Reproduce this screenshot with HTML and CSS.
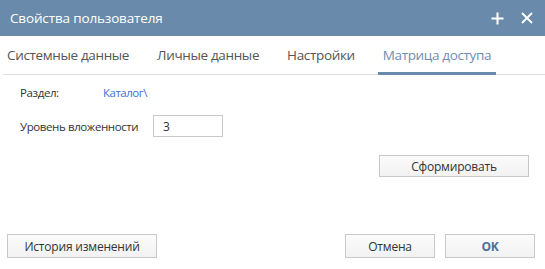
FILE: index.html
```html
<!doctype html>
<html>
<head>
	<meta charset="utf-8">
	<title>Свойства пользователя</title>
	<link rel="stylesheet" href="styles.css">
</head>
<body>
	<!-- окно свойств -->
	<div class="dialog">
		<!-- заголовок -->
		<div class="dlg-head">
			<span class="dlg-title">Свойства пользователя</span>
			<span class="dlg-tools">
				<svg width="13" height="13" viewBox="0 0 13 13"><path d="M6.5 0.5v12M0.5 6.5h12" stroke="#fff" stroke-width="2"/></svg>
				<svg width="12" height="12" viewBox="0 0 12 12"><path d="M1 1l10 10M11 1L1 11" stroke="#fff" stroke-width="1.8"/></svg>
			</span>
		</div>
		<!-- вкладки -->
		<ul class="tabs">
			<li>Системные данные</li>
			<li>Личные данные</li>
			<li>Настройки</li>
			<li class="current">Матрица доступа</li>
		</ul>
		<!-- содержимое вкладки -->
		<div class="dlg-body">
			<div class="row row-first">
				<span class="label">Раздел:</span>
				<a class="link" href="#">Каталог\</a>
			</div>
			<div class="row">
				<span class="label label-wide">Уровень вложенности</span>
				<input class="field" type="text" value="3">
			</div>
			<div class="actions">
				<button class="btn btn-wide">Сформировать</button>
			</div>
		</div>
		<!-- кнопки внизу -->
		<div class="dlg-foot">
			<button class="btn btn-wide">История изменений</button>
			<span class="foot-right">
				<button class="btn">Отмена</button>
				<button class="btn btn-ok">OK</button>
			</span>
		</div>
	</div>
</body>
</html>
```

FILE: styles.css
```css
html,body{margin:0;padding:0;background:#fff;}
body{font-family:"Open Sans","Noto Sans",sans-serif;color:#333;}
ul{margin:0;padding:0;list-style:none;}
/* окно */
.dialog{
	width:545px;
	height:265px;
	display:flex;
	flex-direction:column;
	background:#fff;
	box-shadow:0 2px 3px rgba(0,0,0,0.25);
}
/* заголовок */
.dlg-head{
	height:36px;
	background-color:#6a8aab;
	display:flex;
	align-items:center;
	justify-content:space-between;
	padding:0 12px 0 10px;
	color:#fff;
}
.dlg-title{font-size:13.5px;letter-spacing:-0.15px;}
.dlg-tools{display:flex;align-items:center;gap:17px;}
.dlg-tools svg{display:block;}
/* вкладки */
.tabs{
	display:flex;
	gap:18px;
	height:38px;
	margin:0 0 0 3px;
	border-bottom:1px solid #dcdcdc;
}
.tabs li{
	padding:0 5px;
	line-height:38px;
	font-size:13.5px;
	letter-spacing:-0.35px;
	color:#555;
}
.tabs li:first-child{padding-left:4px;}
.tabs li.current{
	color:#6e8eb0;
	border-bottom:3px solid #6a8aab;
	height:36px;
	margin-bottom:-1px;
}
/* содержимое */
.dlg-body{
	flex:1;
	padding:8px 16px 0 20px;
	font-size:11.5px;
}
.row{display:flex;align-items:center;height:22px;}
.row-first{height:18px;margin-bottom:14px;}
.label{width:83px;letter-spacing:-0.4px;}
.label-wide{width:133px;}
.link{color:#3d6fd8;text-decoration:none;letter-spacing:-0.5px;}
.field{
	width:70px;
	height:22px;
	box-sizing:border-box;
	border:1px solid #c8c8c8;
	padding:0 9px;
	font:12px "Open Sans",sans-serif;
	color:#333;
}
.actions{display:flex;justify-content:flex-end;margin-top:18px;}
/* кнопки */
.btn{
	width:90px;
	height:24px;
	box-sizing:border-box;
	border:1px solid #c8c8c8;
	background:linear-gradient(#fbfbfb,#f2f2f2);
	font:12px "Open Sans",sans-serif;
	letter-spacing:-0.2px;
	color:#333;
	padding:0;
}
.btn-wide{width:150px;}
.actions .btn{height:22px;}
.btn-ok{color:#4a7099;font-weight:bold;}
.dlg-foot{
	display:flex;
	justify-content:space-between;
	padding:0 10px 7px 7px;
}
.foot-right{display:flex;gap:10px;}
```
